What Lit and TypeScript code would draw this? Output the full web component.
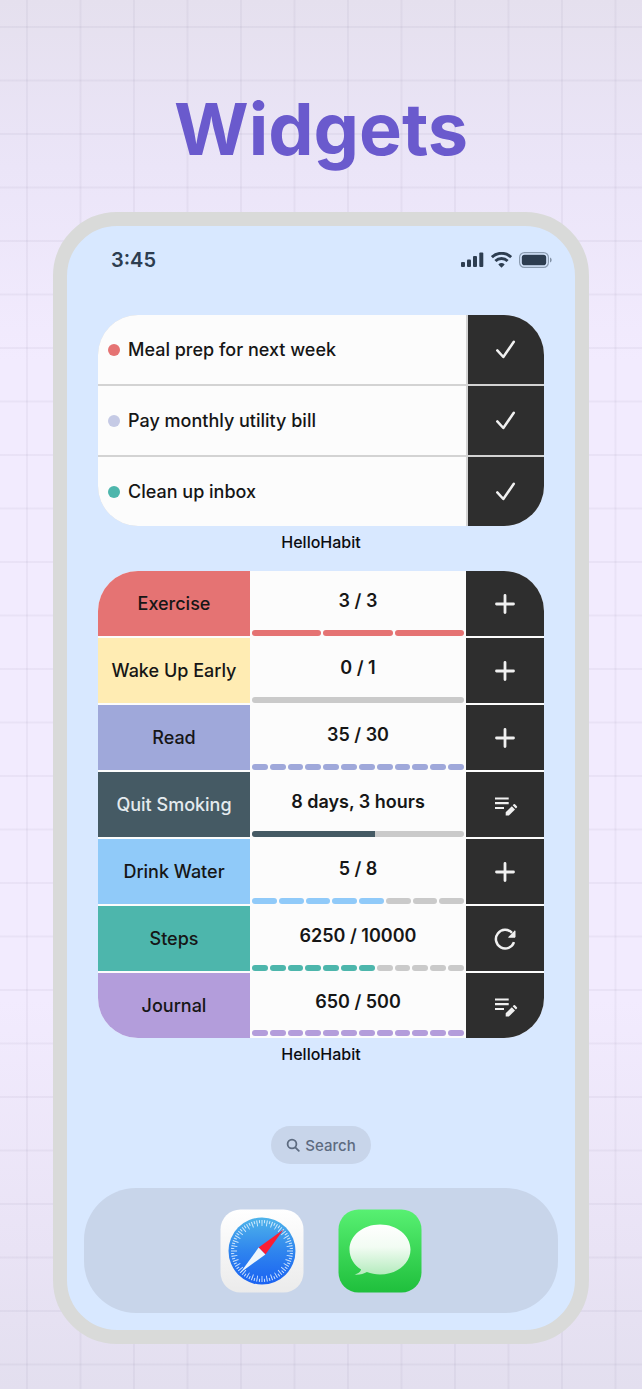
import { LitElement, html, css, svg, nothing } from 'lit';
import { customElement, property } from 'lit/decorators.js';
import { styleMap } from 'lit/directives/style-map.js';

type Action = 'check' | 'plus' | 'log' | 'sync';

interface Task {
  title: string;
  color: string;
}

interface Habit {
  name: string;
  color: string;
  ink?: string;
  value: string;
  segments: number;
  filled: number;
  action: Action;
}

const TASKS: Task[] = [
  { title: 'Meal prep for next week', color: '#e57373' },
  { title: 'Pay monthly utility bill', color: '#c5cae5' },
  { title: 'Clean up inbox', color: '#4db6ac' },
];

const HABITS: Habit[] = [
  { name: 'Exercise', color: '#e57373', value: '3 / 3', segments: 3, filled: 3, action: 'plus' },
  { name: 'Wake Up Early', color: '#ffecb3', value: '0 / 1', segments: 1, filled: 0, action: 'plus' },
  { name: 'Read', color: '#9fa8da', value: '35 / 30', segments: 12, filled: 12, action: 'plus' },
  { name: 'Quit Smoking', color: '#455a64', ink: '#e4eaee', value: '8 days, 3 hours', segments: 1, filled: 0.58, action: 'log' },
  { name: 'Drink Water', color: '#90caf9', value: '5 / 8', segments: 8, filled: 5, action: 'plus' },
  { name: 'Steps', color: '#4db6ac', value: '6250 / 10000', segments: 12, filled: 7, action: 'sync' },
  { name: 'Journal', color: '#b39ddb', value: '650 / 500', segments: 12, filled: 12, action: 'log' },
];

const ICONS = {
  check: svg`<path d="M4.300 13.400 10.300 20 20.800 4.800" />`,
  plus: svg`<path d="M13 4.500v17M4.500 13h17" stroke-width="2.8" />`,
  log: svg`
    <path d="M3 6.500h13.700M3 11.200h13.700M3 16h9" stroke-width="2.2" />
    <g fill="currentColor" stroke="none">
      <path d="M13.700 23.500v-3.200l6.100-6.100 3.200 3.200-6.100 6.100z" />
      <path d="M20.700 13.300l1-1a.9.9 0 0 1 1.300 0l1.900 1.900a.9.9 0 0 1 0 1.300l-1 1z" />
    </g>`,
  sync: svg`
    <path d="M22 16.200a9.300 9.300 0 1 1-2-9.400" />
    <path d="M23 4.800v6.400h-6.400z" stroke-width="1" fill="currentColor" />`,
};

const ACTION_LABELS: Record<Action, string> = {
  check: 'Complete',
  plus: 'Add to',
  log: 'Log',
  sync: 'Refresh',
};

@customElement('action-button')
export class ActionButton extends LitElement {
  @property({ type: String }) icon: Action = 'plus';
  @property({ type: String }) target = '';

  static styles = css`
    :host {
      display: flex;
    }
    button {
      flex: 1;
      display: flex;
      align-items: center;
      justify-content: center;
      padding: 0;
      border: none;
      background: #2e2e2e;
      color: #f0f0f0;
      cursor: pointer;
    }
    svg {
      width: 26px;
      height: 26px;
      fill: none;
      stroke: currentColor;
      stroke-width: 2.5;
      stroke-linecap: round;
      stroke-linejoin: round;
    }
    .log svg,
    .sync svg {
      stroke-linecap: butt;
      stroke-linejoin: miter;
    }
  `;

  render() {
    return html`
      <button class=${this.icon} aria-label="${ACTION_LABELS[this.icon]} ${this.target}">
        <svg viewBox="0 0 26 26">${ICONS[this.icon]}</svg>
      </button>
    `;
  }
}

@customElement('segment-bar')
export class SegmentBar extends LitElement {
  @property({ type: Number }) segments = 1;
  @property({ type: Number }) filled = 0;
  @property({ type: String }) color = '#ccc';

  static styles = css`
    :host {
      display: flex;
      gap: 2px;
      height: 6px;
    }
    .segment {
      flex: 1;
      border-radius: 3px;
      overflow: hidden;
      background: #cacaca;
    }
    .fill {
      height: 100%;
    }
  `;

  render() {
    return Array.from({ length: this.segments }, (_, i) => {
      const part = Math.max(0, Math.min(1, this.filled - i));
      const fill = { width: `${part * 100}%`, background: this.color };
      return html`
        <div class="segment">
          ${part > 0 ? html`<div class="fill" style=${styleMap(fill)}></div>` : nothing}
        </div>
      `;
    });
  }
}

@customElement('task-widget')
export class TaskWidget extends LitElement {
  @property({ attribute: false }) tasks: Task[] = [];

  static styles = css`
    :host {
      display: block;
    }
    ul {
      display: grid;
      gap: 2px;
      margin: 0;
      padding: 0;
      list-style: none;
      border-radius: 40px;
      overflow: hidden;
      background: #d3d3d3;
    }
    li {
      display: grid;
      grid-template-columns: 1fr 76px;
      gap: 2px;
      height: 69px;
    }
    .task {
      display: flex;
      align-items: center;
      gap: 8px;
      padding-left: 10px;
      background: #fcfcfc;
      color: #161616;
      font-size: 18px;
      font-weight: 500;
    }
    .dot {
      width: 12px;
      height: 12px;
      border-radius: 50%;
    }
  `;

  render() {
    return html`
      <ul>
        ${this.tasks.map(
          (task) => html`
            <li>
              <div class="task">
                <span class="dot" style=${styleMap({ background: task.color })}></span>
                <span>${task.title}</span>
              </div>
              <action-button icon="check" target=${task.title}></action-button>
            </li>
          `
        )}
      </ul>
    `;
  }
}

@customElement('habit-widget')
export class HabitWidget extends LitElement {
  @property({ attribute: false }) habits: Habit[] = [];

  static styles = css`
    :host {
      display: block;
    }
    ul {
      display: grid;
      gap: 2px;
      margin: 0;
      padding: 0;
      list-style: none;
      border-radius: 40px;
      overflow: hidden;
      background: #fcfcfc;
    }
    li {
      display: grid;
      grid-template-columns: 152px 1fr 78px;
      height: 65px;
      font-size: 18px;
      color: #161616;
    }
    .name {
      display: flex;
      align-items: center;
      justify-content: center;
      font-weight: 500;
    }
    .progress {
      display: flex;
      flex-direction: column;
      padding: 0 2px;
    }
    .value {
      flex: 1;
      display: flex;
      align-items: center;
      justify-content: center;
      font-weight: 600;
    }
    li:last-child .progress {
      padding-bottom: 2px;
    }
  `;

  render() {
    return html`
      <ul>
        ${this.habits.map(
          (habit) => html`
            <li>
              <div
                class="name"
                style=${styleMap({ background: habit.color, color: habit.ink ?? 'inherit' })}
              >
                ${habit.name}
              </div>
              <div class="progress">
                <div class="value">${habit.value}</div>
                <segment-bar
                  .segments=${habit.segments}
                  .filled=${habit.filled}
                  .color=${habit.color}
                ></segment-bar>
              </div>
              <action-button icon=${habit.action} target=${habit.name}></action-button>
            </li>
          `
        )}
      </ul>
    `;
  }
}

@customElement('status-bar')
export class StatusBar extends LitElement {
  static styles = css`
    :host {
      display: flex;
      align-items: center;
      justify-content: space-between;
      height: 68px;
      padding: 0 23px 0 44px;
      color: #2d3d50;
      font-size: 20px;
      font-weight: 600;
    }
    .icons {
      display: flex;
      align-items: center;
      gap: 7px;
    }
    svg {
      display: block;
      fill: currentColor;
    }
  `;

  render() {
    return html`
      <span>3:45</span>
      <div class="icons">
        <svg width="23" height="16" viewBox="0 0 23 16">
          <rect x="0" y="10" width="4" height="5" rx="1" />
          <rect x="6" y="7.5" width="4" height="7.5" rx="1" />
          <rect x="12" y="4" width="4" height="11" rx="1" />
          <rect x="18.3" y="0.5" width="4" height="14.5" rx="1" />
        </svg>
        <svg width="21" height="16" viewBox="0 0 21 16">
          <g fill="none" stroke="currentColor" stroke-width="2.9">
            <path d="M.9 5.200a13.700 13.700 0 0 1 19.200 0" />
            <path d="M4.400 9a8.700 8.700 0 0 1 12.200 0" />
          </g>
          <path d="M10.500 15.700 7.300 12.400a4.700 4.700 0 0 1 6.400 0z" />
        </svg>
        <svg width="33" height="16" viewBox="0 0 33 16">
          <rect x="0.6" y="0.6" width="28.8" height="14.8" rx="4.8" fill="none"
            stroke="currentColor" stroke-opacity="0.45" stroke-width="1.2" />
          <rect x="2.8" y="2.8" width="24.4" height="10.4" rx="2.8" />
          <path d="M31 5.600c2.200.8 2.200 4.200 0 5z" fill-opacity="0.5" />
        </svg>
      </div>
    `;
  }
}

@customElement('app-dock')
export class AppDock extends LitElement {
  static styles = css`
    :host {
      display: flex;
      align-items: center;
      justify-content: center;
      gap: 34px;
      height: 125px;
      margin: 0 17px;
      border-radius: 52px;
      background: #c8d5ea;
    }
    button {
      padding: 0;
      border: none;
      background: none;
      cursor: pointer;
    }
    svg {
      display: block;
      width: 84px;
      height: 84px;
    }
  `;

  render() {
    return html`
      <button aria-label="Safari">
        <svg viewBox="0 0 84 84">
          <defs>
            <linearGradient id="plate" x2="0" y2="1">
              <stop offset="0" stop-color="#ffffff" />
              <stop offset="1" stop-color="#ebebeb" />
            </linearGradient>
            <linearGradient id="dial" x2="0" y2="1">
              <stop offset="0" stop-color="#4fb4ea" />
              <stop offset="0.5" stop-color="#2f85ee" />
              <stop offset="1" stop-color="#1a62f2" />
            </linearGradient>
          </defs>
          <rect x="0.5" y="0.5" width="83" height="83" rx="20" fill="url(#plate)" />
          <circle cx="42" cy="42" r="33.5" fill="url(#dial)" />
          <g fill="none" stroke="#e6f3ff" stroke-opacity="0.85">
            <circle cx="42" cy="42" r="28" stroke-width="6" pathLength="360"
              stroke-dasharray="2 8" stroke-dashoffset="1" />
            <circle cx="42" cy="42" r="29.4" stroke-width="3.2" pathLength="360"
              stroke-dasharray="2 8" stroke-dashoffset="6" />
          </g>
          <path d="M63.500 20.500 38.600 38.600 45.400 45.400z" fill="#fb1d34" />
          <path d="M20.500 63.500 38.600 38.600 45.400 45.400z" fill="#eef6fc" />
        </svg>
      </button>
      <button aria-label="Messages">
        <svg viewBox="0 0 84 84">
          <defs>
            <linearGradient id="green" x2="0" y2="1">
              <stop offset="0" stop-color="#58f072" />
              <stop offset="1" stop-color="#1fbf3c" />
            </linearGradient>
            <linearGradient id="bubble" x2="0" y2="1">
              <stop offset="0" stop-color="#ffffff" />
              <stop offset="0.45" stop-color="#f2fcf3" />
              <stop offset="1" stop-color="#b4ebbd" />
            </linearGradient>
          </defs>
          <rect x="0.5" y="0.5" width="83" height="83" rx="20" fill="url(#green)" />
          <path
            d="M42 15.500C25 15.500 11.500 26.500 11.500 40.500c0 8.500 4.600 15.600 11.600 20-.6 2.400-2.900 4.200-6.600 5.100 5.200.4 9.300-.9 12.400-2.600 4 1.500 8.400 2.500 13.100 2.500 17 0 30.500-11 30.500-25S59 15.500 42 15.500z"
            fill="url(#bubble)" />
        </svg>
      </button>
    `;
  }
}

@customElement('app-root')
export class AppRoot extends LitElement {
  static styles = css`
    :host {
      --cell: calc(100vw / 12);
      display: block;
      box-sizing: border-box;
      min-height: 100vh;
      padding: 86px 53px 45px;
      font-family: Inter, 'Liberation Sans', sans-serif;
      background:
        linear-gradient(90deg, rgba(80, 70, 110, 0.055) 2px, transparent 2px) 26px 26px / var(--cell) var(--cell),
        linear-gradient(rgba(80, 70, 110, 0.055) 2px, transparent 2px) 26px 26px / var(--cell) var(--cell),
        linear-gradient(#e5e0ee, #ebe5f8 12%, #f2ebfe 26%, #f2ebfe 72%, #e9e3f5 90%, #e3dfef);
    }
    h1 {
      margin: 0 0 40px;
      color: #6a5acd;
      font-size: 72px;
      line-height: 86px;
      font-weight: 700;
      text-align: center;
    }
    .phone {
      border: 14px solid #d9dad9;
      border-radius: 64px;
      background: #d8e8ff;
      padding-bottom: 17px;
    }
    .widgets {
      display: grid;
      gap: 13px;
      margin: 21px 31px 56px;
    }
    figure {
      margin: 0;
    }
    figcaption {
      color: #0c0c10;
      font-size: 16px;
      line-height: 32px;
      font-weight: 500;
      text-align: center;
    }
    .search {
      display: flex;
      align-items: center;
      gap: 5px;
      height: 38px;
      margin: 0 auto 24px;
      padding: 0 15px;
      border: none;
      border-radius: 19px;
      background: #c8d5ea;
      color: #5d6b80;
      font: inherit;
      font-size: 15px;
      font-weight: 500;
      cursor: pointer;
    }
    .search svg {
      width: 14px;
      height: 14px;
      fill: none;
      stroke: currentColor;
      stroke-width: 1.8;
      stroke-linecap: round;
    }
  `;

  render() {
    return html`
      <h1>Widgets</h1>
      <main class="phone">
        <status-bar></status-bar>
        <div class="widgets">
          <figure>
            <task-widget .tasks=${TASKS}></task-widget>
            <figcaption>HelloHabit</figcaption>
          </figure>
          <figure>
            <habit-widget .habits=${HABITS}></habit-widget>
            <figcaption>HelloHabit</figcaption>
          </figure>
        </div>
        <button class="search">
          <svg viewBox="0 0 14 14"><circle cx="6" cy="6" r="4.4" /><path d="m9.300 9.300 3.500 3.500" /></svg>
          Search
        </button>
        <app-dock></app-dock>
      </main>
    `;
  }
}

declare global {
  interface HTMLElementTagNameMap {
    'app-root': AppRoot;
    'action-button': ActionButton;
    'segment-bar': SegmentBar;
    'task-widget': TaskWidget;
    'habit-widget': HabitWidget;
    'status-bar': StatusBar;
    'app-dock': AppDock;
  }
}
